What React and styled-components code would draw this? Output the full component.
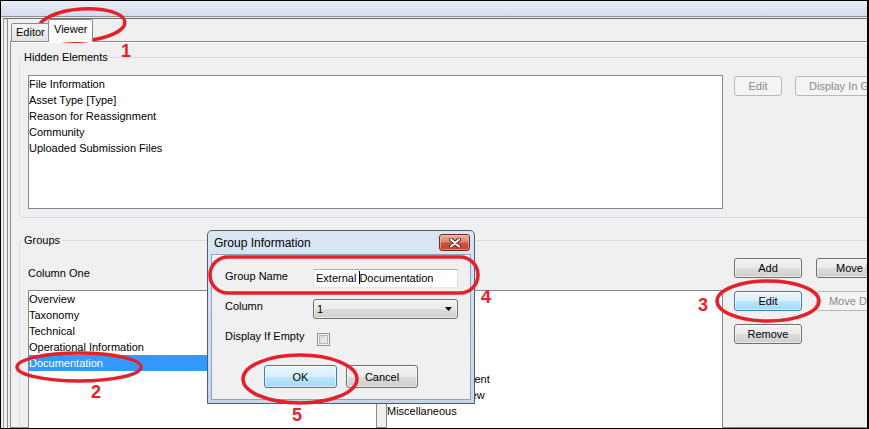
import React from "react";
import styled, { createGlobalStyle } from "styled-components";

const uiFont = `"Liberation Sans", Arial, sans-serif`;

const GlobalStyle = createGlobalStyle`
  html, body {
    margin: 0;
    padding: 0;
    background: #fff;
  }
  body {
    font-family: ${uiFont};
  }
`;

const Stage = styled.div`
  position: relative;
  width: 869px;
  height: 429px;
`;

const Frame = styled.div`
  width: 869px;
  height: 429px;
  box-sizing: border-box;
  border: 1px solid #000;
  border-right-width: 2px;
  background: #f0f0f0;
  display: flex;
  flex-direction: column;
  overflow: hidden;
  font: 11px ${uiFont};
  color: #000;
`;

const TitleBand = styled.div`
  flex: none;
  height: 15px;
  background: linear-gradient(#e9edf6, #d5dcee);
  border-bottom: 1px solid #8e8e8e;
`;

const Body = styled.div`
  flex: 1;
  min-height: 0;
  display: flex;
  margin: 1px 0 0 2px;
  border-top: 1px solid #6d6d6d;
  border-left: 1px solid #a0a0a0;
  padding-left: 3px;
`;

const TabArea = styled.div`
  flex: 1;
  min-width: 0;
  display: flex;
  flex-direction: column;
  border-left: 1px solid #8d8d8d;
  padding-left: 1px;
`;

const TabStrip = styled.div`
  flex: none;
  height: 22px;
  display: flex;
  align-items: flex-end;
  padding-left: 2px;
  position: relative;
  z-index: 1;
`;

const Tab = styled.div`
  box-sizing: border-box;
  width: ${(p) => (p.$active ? 45 : 40)}px;
  height: ${(p) => (p.$active ? 23 : 18)}px;
  margin-bottom: ${(p) => (p.$active ? -1 : 0)}px;
  margin-left: ${(p) => (p.$active ? -3 : 0)}px;
  padding: 0 ${(p) => (p.$active ? 5 : 4)}px;
  border: 1px solid #898c95;
  border-bottom: none;
  border-radius: 2px 2px 0 0;
  background: ${(p) =>
    p.$active ? "#fbfbfb" : "linear-gradient(#f4f4f4, #e2e2e2)"};
  line-height: ${(p) => (p.$active ? 19 : 16)}px;
  white-space: nowrap;
  overflow: hidden;
  position: relative;
  z-index: ${(p) => (p.$active ? 2 : 1)};
`;

const Panel = styled.div`
  flex: 1;
  min-height: 0;
  width: 960px;
  margin-left: 1px;
  border: 1px solid #898c95;
  box-shadow: inset 0 1px 0 #fff;
  background: #f0f0f0;
  display: flex;
  flex-direction: column;
`;

const GroupBox = styled.fieldset`
  flex: none;
  box-sizing: border-box;
  width: 900px;
  min-width: 0;
  margin: ${(p) => p.$top}px 0 0 8px;
  padding: 0 0 ${(p) => p.$bottom}px 0;
  border: 1px solid #d5dfe5;
  border-radius: 3px;
`;

const Legend = styled.legend`
  margin-left: 2px;
  padding: 0 2px;
  line-height: 13px;
  font-size: 11px;
`;

const HiddenContent = styled.div`
  display: flex;
  align-items: flex-start;
  padding: 11px 0 0 8px;
`;

const ListBox = styled.div`
  flex: none;
  box-sizing: border-box;
  width: ${(p) => p.$w}px;
  height: ${(p) => p.$h}px;
  border: 1px solid #828790;
  background: #fff;
  overflow: hidden;
`;

const ListItem = styled.div`
  height: 16px;
  line-height: 16px;
  white-space: nowrap;
  background: ${(p) => (p.$selected ? "#3399ff" : "transparent")};
  color: ${(p) => (p.$selected ? "#fff" : "#000")};
`;

const ButtonRow = styled.div`
  display: flex;
  gap: 13px;
  margin: 1px 0 0 11px;
`;

const Button = styled.button`
  flex: none;
  box-sizing: border-box;
  width: ${(p) => p.$w}px;
  height: ${(p) => p.$h || 20}px;
  padding: 0;
  font: 11px ${uiFont};
  white-space: nowrap;
  overflow: hidden;
  border-radius: 3px;
  color: ${(p) => (p.disabled ? "#8a8a8a" : "#000")};
  border: 1px solid
    ${(p) => (p.disabled ? "#b5b9bc" : p.$focus ? "#3c7fb1" : "#707070")};
  background: ${(p) =>
    p.disabled
      ? "#f4f4f4"
      : p.$focus
      ? "linear-gradient(#eaf6fd 0%, #d9f0fc 50%, #bee6fd 50%, #a7d9f5 100%)"
      : "linear-gradient(#f2f2f2 0%, #ebebeb 50%, #dddddd 50%, #cfcfcf 100%)"};
  box-shadow: ${(p) =>
    p.disabled ? "none" : "inset 0 0 0 1px rgba(255, 255, 255, 0.55)"};
`;

const GroupsContent = styled.div`
  display: flex;
  align-items: flex-start;
  padding-left: 8px;
`;

const Columns = styled.div`
  display: grid;
  grid-template-columns: 349px 337px;
  column-gap: 9px;
  margin-top: 20px;
`;

const Column = styled.div`
  display: flex;
  flex-direction: column;
`;

const ColumnLabel = styled.div`
  height: 13px;
  line-height: 13px;
  margin-bottom: 10px;
`;

const ButtonGrid = styled.div`
  display: grid;
  grid-template-columns: 68px 84px;
  column-gap: 14px;
  row-gap: 13px;
  margin: 11px 0 0 11px;
`;

/* overlay: the dialog window and the red annotations */

const Overlay = styled.div`
  position: absolute;
  inset: 0;
  pointer-events: none;
  font: 11px ${uiFont};
  color: #000;
`;

const Dialog = styled.div`
  position: absolute;
  left: 207px;
  top: 230px;
  width: 268px;
  height: 174px;
  box-sizing: border-box;
  border: 1px solid #505c6b;
  border-radius: 5px 5px 0 0;
  background: linear-gradient(#dbe6f4, #c6d5e8);
  display: flex;
  flex-direction: column;
`;

const TitleBar = styled.div`
  flex: none;
  height: 23px;
  display: flex;
  align-items: center;
  justify-content: space-between;
  padding: 0 4px 0 6px;
  font-size: 12px;
`;

const CloseButton = styled.div`
  box-sizing: border-box;
  width: 31px;
  height: 17px;
  border: 1px solid #6e2a20;
  border-radius: 3px;
  background: linear-gradient(#eab0a2 0%, #dc846d 45%, #c9563c 55%, #c0442c 100%);
  box-shadow: inset 0 0 0 1px rgba(255, 220, 210, 0.45);
  display: flex;
  align-items: center;
  justify-content: center;
`;

const Client = styled.div`
  flex: 1;
  margin: 0 3px 3px;
  border: 1px solid #8fa3bb;
  background: #f0f0f0;
  padding-top: 14px;
`;

const Form = styled.div`
  padding-left: 13px;
`;

const FormRow = styled.div`
  display: grid;
  grid-template-columns: 88px 145px;
  align-items: start;
  margin-top: ${(p) => p.$mt || 0}px;
`;

const FieldLabel = styled.div`
  line-height: 14px;
  white-space: nowrap;
`;

const TextField = styled.div`
  box-sizing: border-box;
  height: 19px;
  border: 1px solid;
  border-color: #abadb3 #dbdfe6 #e3e9ef #e2e3ea;
  background: #fff;
  padding-left: 2px;
  line-height: 17px;
  white-space: nowrap;
`;

const Caret = styled.span`
  display: inline-block;
  width: 1px;
  height: 13px;
  margin-right: -1px;
  background: #000;
  vertical-align: -2px;
`;

const Combo = styled.div`
  box-sizing: border-box;
  height: 20px;
  border: 1px solid #707070;
  border-radius: 3px;
  background: linear-gradient(#f2f2f2 0%, #ebebeb 50%, #dddddd 50%, #cfcfcf 100%);
  box-shadow: inset 0 0 0 1px rgba(255, 255, 255, 0.55);
  display: flex;
  align-items: center;
  justify-content: space-between;
  padding: 0 5px 0 3px;
`;

const Checkbox = styled.div`
  box-sizing: border-box;
  width: 13px;
  height: 13px;
  margin: 4px 0 0 4px;
  border: 1px solid #8e8f8f;
  background: linear-gradient(135deg, #cfcfcf, #f7f7f7);
  box-shadow: inset 0 0 0 1px #f4f4f4, inset 0 0 0 2px #b4b8bd;
`;

const DialogButtons = styled.div`
  display: flex;
  justify-content: center;
  gap: 9px;
  margin-top: 19px;
`;

const Scribble = styled.svg`
  position: absolute;
  left: 0;
  top: 0;
  overflow: visible;
`;

const Mark = styled.span`
  position: absolute;
  left: ${(p) => p.$x}px;
  top: ${(p) => p.$y}px;
  font: bold 18px/18px ${uiFont};
  color: #e8202a;
`;

const hiddenElements = [
  "File Information",
  "Asset Type [Type]",
  "Reason for Reassignment",
  "Community",
  "Uploaded Submission Files",
];

const columnOne = [
  "Overview",
  "Taxonomy",
  "Technical",
  "Operational Information",
  "Documentation",
];

const columnTwo = [
  "Contacts",
  "Security",
  "Legal",
  "Support",
  "Training",
  "Licensing Agreement",
  "Architecture Review",
  "Miscellaneous",
];

const marks = [
  { n: 1, x: 121, y: 42 },
  { n: 2, x: 91, y: 383 },
  { n: 3, x: 698, y: 296 },
  { n: 4, x: 481, y: 288 },
  { n: 5, x: 292, y: 406 },
];

export default function App() {
  return (
    <>
      <GlobalStyle />
      <Stage>
        <Frame>
          <TitleBand />
          <Body>
            <TabArea>
              <TabStrip>
                <Tab>Editor</Tab>
                <Tab $active>Viewer</Tab>
              </TabStrip>
              <Panel>
                <GroupBox $top={9} $bottom={8}>
                  <Legend>Hidden Elements</Legend>
                  <HiddenContent>
                    <ListBox $w={695} $h={134}>
                      {hiddenElements.map((t) => (
                        <ListItem key={t}>{t}</ListItem>
                      ))}
                    </ListBox>
                    <ButtonRow>
                      <Button $w={48} disabled>
                        Edit
                      </Button>
                      <Button $w={110} disabled>
                        Display In Group
                      </Button>
                    </ButtonRow>
                  </HiddenContent>
                </GroupBox>

                <GroupBox $top={16} $bottom={8}>
                  <Legend>Groups</Legend>
                  <GroupsContent>
                    <Columns>
                      <Column>
                        <ColumnLabel>Column One</ColumnLabel>
                        <ListBox $w={349} $h={150}>
                          {columnOne.map((t) => (
                            <ListItem key={t} $selected={t === "Documentation"}>
                              {t}
                            </ListItem>
                          ))}
                        </ListBox>
                      </Column>
                      <Column>
                        <ColumnLabel>Column Two</ColumnLabel>
                        <ListBox $w={337} $h={150}>
                          {columnTwo.map((t) => (
                            <ListItem key={t}>{t}</ListItem>
                          ))}
                        </ListBox>
                      </Column>
                    </Columns>
                    <ButtonGrid>
                      <Button $w={68}>Add</Button>
                      <Button $w={84}>Move Up</Button>
                      <Button $w={68} $focus>
                        Edit
                      </Button>
                      <Button $w={84} disabled>
                        Move Down
                      </Button>
                      <Button $w={68}>Remove</Button>
                    </ButtonGrid>
                  </GroupsContent>
                </GroupBox>
              </Panel>
            </TabArea>
          </Body>
        </Frame>

        <Overlay>
          <Dialog>
            <TitleBar>
              <span>Group Information</span>
              <CloseButton>
                <svg width="12" height="10" viewBox="0 0 12 10">
                  <path
                    d="M2 1.5 L10 8.5 M10 1.5 L2 8.5"
                    stroke="#5a2219"
                    strokeWidth="4"
                    strokeLinecap="round"
                  />
                  <path
                    d="M2 1.5 L10 8.5 M10 1.5 L2 8.5"
                    stroke="#fff"
                    strokeWidth="2.2"
                    strokeLinecap="round"
                  />
                </svg>
              </CloseButton>
            </TitleBar>
            <Client>
              <Form>
                <FormRow>
                  <FieldLabel>Group Name</FieldLabel>
                  <TextField>
                    External <Caret />
                    Documentation
                  </TextField>
                </FormRow>
                <FormRow $mt={11}>
                  <FieldLabel>Column</FieldLabel>
                  <Combo>
                    <span>1</span>
                    <svg width="7" height="4" viewBox="0 0 7 4">
                      <path d="M0 0 H7 L3.5 4 Z" fill="#000" />
                    </svg>
                  </Combo>
                </FormRow>
                <FormRow $mt={10}>
                  <FieldLabel>Display If Empty</FieldLabel>
                  <Checkbox />
                </FormRow>
              </Form>
              <DialogButtons>
                <Button $w={73} $h={23} $focus>
                  OK
                </Button>
                <Button $w={72} $h={23}>
                  Cancel
                </Button>
              </DialogButtons>
            </Client>
          </Dialog>

          <Scribble width="869" height="429" viewBox="0 0 869 429">
            <g fill="none" stroke="#e5202a" strokeWidth="3.5">
              <ellipse cx="82" cy="25" rx="43" ry="16" transform="rotate(-4 82 25)" />
              <ellipse cx="79" cy="367" rx="62" ry="14" />
              <ellipse cx="768" cy="301" rx="51" ry="20" />
              <rect x="210" y="257" width="268" height="36" rx="18" ry="18" />
              <ellipse cx="300" cy="379" rx="57" ry="24" />
            </g>
          </Scribble>
          {marks.map((m) => (
            <Mark key={m.n} $x={m.x} $y={m.y}>
              {m.n}
            </Mark>
          ))}
        </Overlay>
      </Stage>
    </>
  );
}
